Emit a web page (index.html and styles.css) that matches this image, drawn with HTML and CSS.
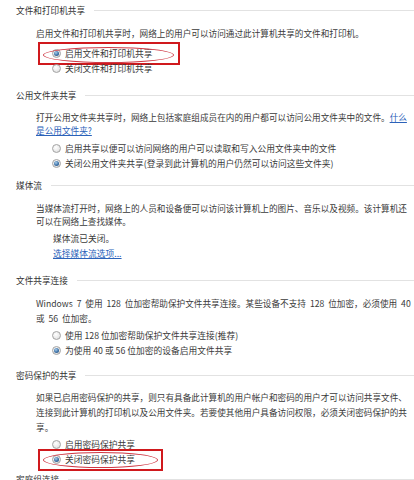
FILE: index.html
```html
<!DOCTYPE html>
<html lang="zh-CN">
<head>
<meta charset="utf-8">
<title>高级共享设置</title>
<link rel="stylesheet" href="styles.css">
</head>
<body>
<div class="page">
  <section class="sec s1">
    <div class="heading"><span>文件和打印机共享</span></div>
    <div class="desc">启用文件和打印机共享时，网络上的用户可以访问通过此计算机共享的文件和打印机。</div>
    <div class="options">
      <div class="opt"><span class="radio on"></span>启用文件和打印机共享<span class="mark-box b1"></span><span class="mark-ellipse e1"></span></div>
      <div class="opt"><span class="radio"></span>关闭文件和打印机共享</div>
    </div>
  </section>

  <section class="sec s2">
    <div class="heading"><span>公用文件夹共享</span></div>
    <div class="desc">打开公用文件夹共享时，网络上包括家庭组成员在内的用户都可以访问公用文件夹中的文件。<a class="link">什么</a><br><a class="link">是公用文件夹?</a></div>
    <div class="options">
      <div class="opt"><span class="radio"></span>启用共享以便可以访问网络的用户可以读取和写入公用文件夹中的文件</div>
      <div class="opt"><span class="radio on"></span>关闭公用文件夹共享(登录到此计算机的用户仍然可以访问这些文件夹)</div>
    </div>
  </section>

  <section class="sec s3">
    <div class="heading"><span>媒体流</span></div>
    <div class="desc">当媒体流打开时，网络上的人员和设备便可以访问该计算机上的图片、音乐以及视频。该计算机还<br>可以在网络上查找媒体。</div>
    <div class="status">
      <div>媒体流已关闭。</div>
      <div><a class="link">选择媒体流选项...</a></div>
    </div>
  </section>

  <section class="sec s4">
    <div class="heading"><span>文件共享连接</span></div>
    <div class="desc">Windows 7 使用 128 位加密帮助保护文件共享连接。某些设备不支持 128 位加密，必须使用 40<br>或 56 位加密。</div>
    <div class="options">
      <div class="opt"><span class="radio"></span>使用 128 位加密帮助保护文件共享连接(推荐)</div>
      <div class="opt"><span class="radio on"></span>为使用 40 或 56 位加密的设备启用文件共享</div>
    </div>
  </section>

  <section class="sec s5">
    <div class="heading"><span>密码保护的共享</span></div>
    <div class="desc">如果已启用密码保护的共享，则只有具备此计算机的用户帐户和密码的用户才可以访问共享文件、<br>连接到此计算机的打印机以及公用文件夹。若要使其他用户具备访问权限，必须关闭密码保护的共<br>享。</div>
    <div class="options">
      <div class="opt"><span class="radio"></span>启用密码保护共享</div>
      <div class="opt"><span class="radio on"></span>关闭密码保护共享<span class="mark-box b2"></span><span class="mark-ellipse e2"></span></div>
    </div>
  </section>

  <section class="sec s6">
    <div class="heading"><span>家庭组连接</span></div>
  </section>
</div>
</body>
</html>
```

FILE: styles.css
```css
html, body {
  margin: 0;
  padding: 0;
  background: #ffffff;
}

body {
  width: 414px;
  height: 480px;
  overflow: hidden;
  font-family: "Noto Sans CJK SC", "Microsoft YaHei", sans-serif;
  font-size: 8.65px;
  color: #3a3a3a;
}

.page {
  padding-top: 3px;
}

.heading {
  display: flex;
  align-items: center;
  gap: 9px;
  padding-left: 16px;
  line-height: 14px;
  height: 14px;
  color: #333333;
}

.heading::after {
  content: "";
  flex: 1;
  height: 1px;
  background: #e2e2e2;
}

.desc {
  margin-left: 36px;
  line-height: 14px;
  white-space: nowrap;
}

.link {
  color: #2b62b9;
  text-decoration: underline;
  cursor: pointer;
}

.options {
  margin-left: 52px;
  font-size: 8.75px;
}

.opt {
  position: relative;
  display: flex;
  align-items: center;
  line-height: 15px;
  height: 15px;
  white-space: nowrap;
}

.radio {
  position: relative;
  box-sizing: border-box;
  width: 9px;
  height: 9px;
  border-radius: 50%;
  border: 1px solid #a3a3a3;
  background: radial-gradient(circle at 40% 35%, #ffffff 0%, #e9e9e9 60%, #d2d2d2 100%);
  margin-right: 4px;
  flex: none;
}

.radio.on::after {
  content: "";
  position: absolute;
  left: 1px;
  top: 1px;
  width: 5px;
  height: 5px;
  border-radius: 50%;
  background: radial-gradient(circle at 40% 35%, #a9cdea 0%, #3f73a8 55%, #1d4474 100%);
}

.status {
  margin-left: 53px;
  line-height: 15px;
  font-size: 8.75px;
}

/* per-section vertical rhythm */
.s1 { margin-bottom: 12px; }
.s1 .heading { margin-bottom: 9px; }
.s1 .desc { margin-bottom: 6px; }

.s2 { margin-bottom: 7px; }
.s2 .heading { margin-bottom: 9px; }
.s2 .desc { line-height: 13px; margin-bottom: 4px; }

.s3 { margin-bottom: 12px; }
.s3 .heading { margin-bottom: 10px; }
.s3 .desc { line-height: 13px; margin-bottom: 3px; }

.s4 { margin-bottom: 10px; }
.s4 .heading { margin-bottom: 9px; }
.s4 .desc { line-height: 15px; margin-bottom: 2px; word-spacing: 2px; }

.s5 { margin-bottom: 5px; }
.s5 .heading { margin-bottom: 8px; }
.s5 .desc { line-height: 15px; margin-bottom: 2px; }

.mark-box {
  position: absolute;
  border: 2px solid #d0191d;
  box-sizing: border-box;
  pointer-events: none;
}

.mark-ellipse {
  position: absolute;
  border: 1px solid #cf3a46;
  border-radius: 50%;
  box-sizing: border-box;
  pointer-events: none;
}

.b1 {
  left: -14px;
  top: -4px;
  width: 142px;
  height: 23px;
}

.e1 {
  left: -9px;
  top: 1px;
  width: 131px;
  height: 16px;
}

.b2 {
  left: -14px;
  top: -3px;
  width: 125px;
  height: 22px;
}

.e2 {
  left: -9px;
  top: 0px;
  width: 115px;
  height: 16px;
}
```
